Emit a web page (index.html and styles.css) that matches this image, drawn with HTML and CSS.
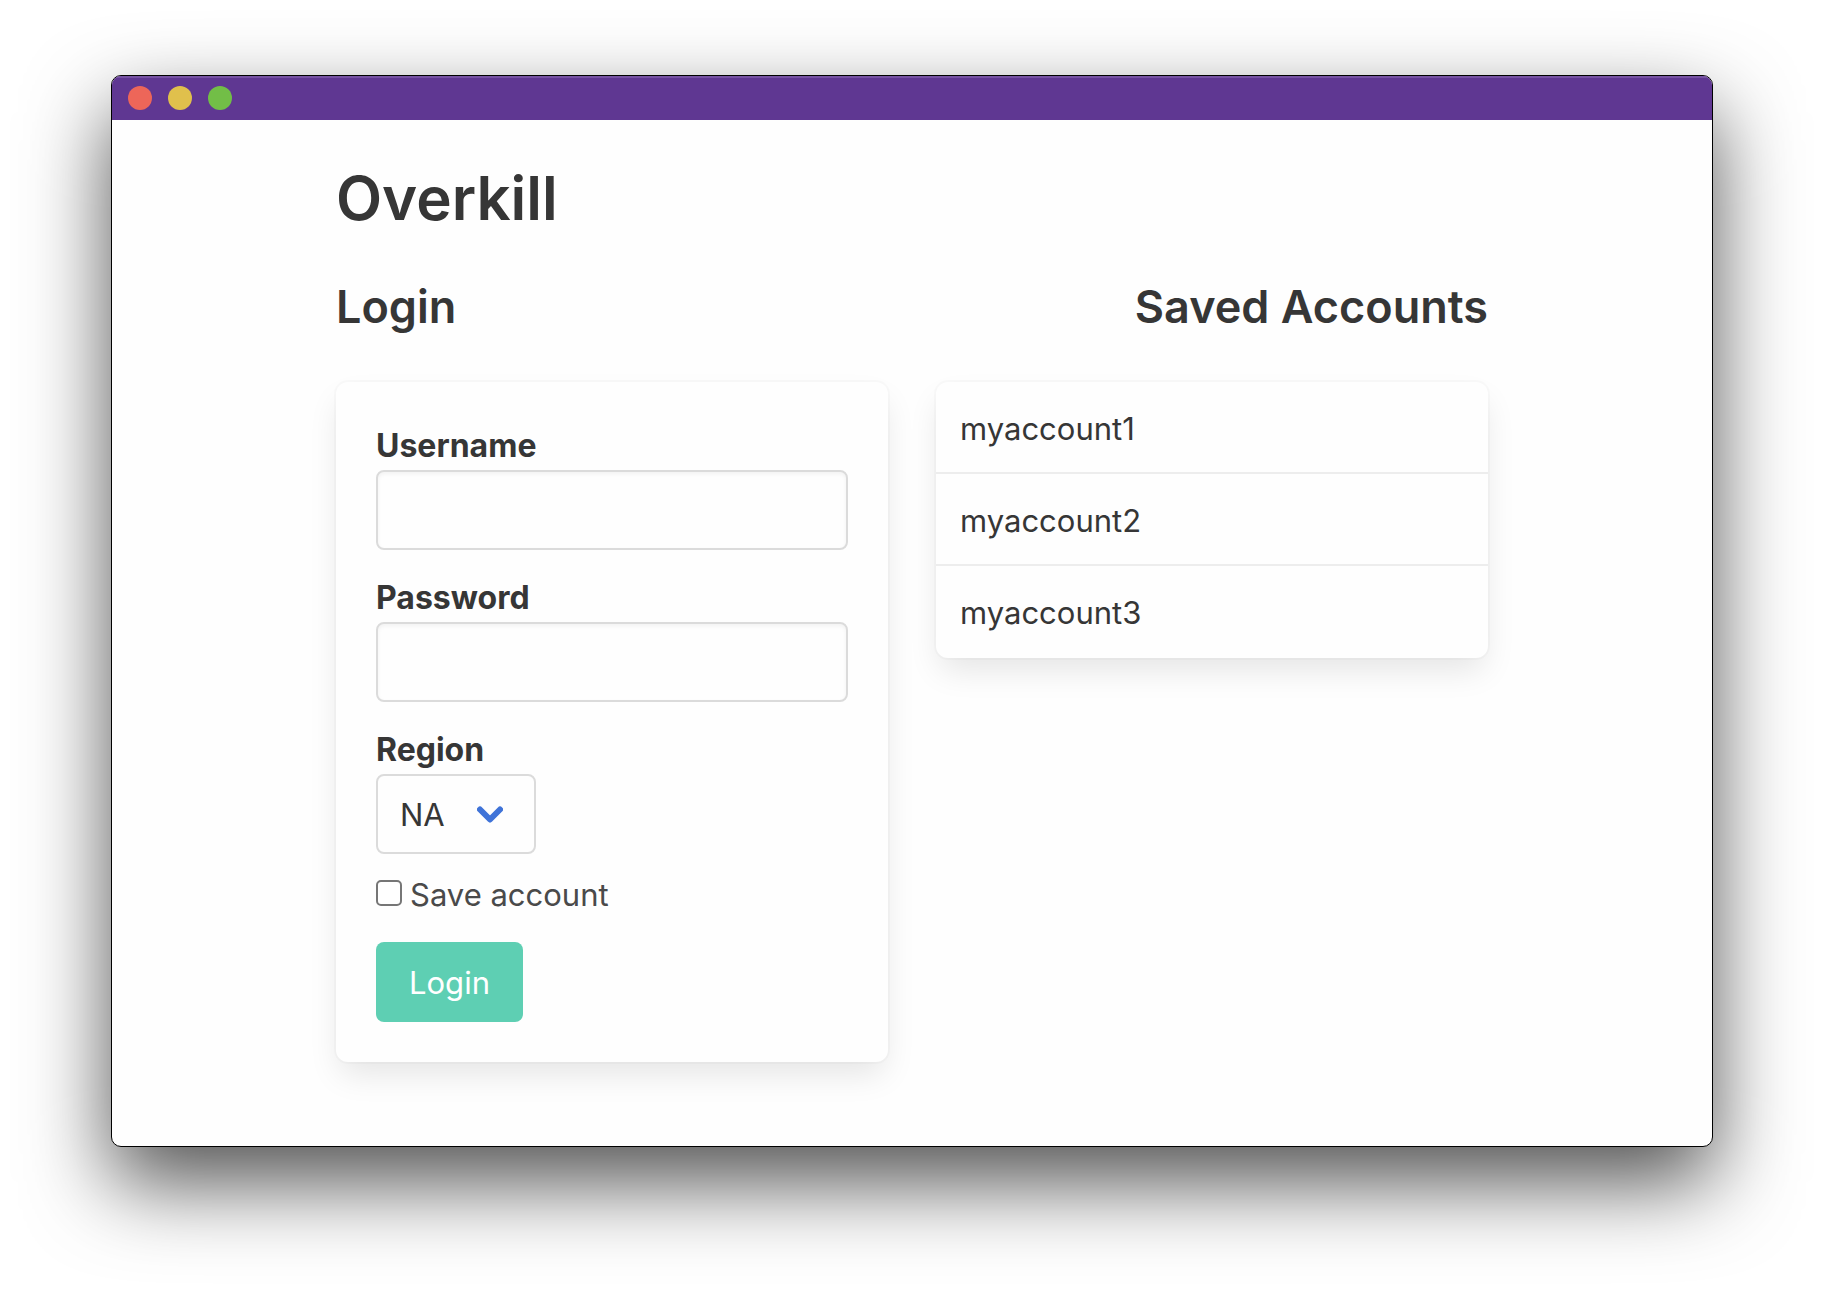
FILE: index.html
```html
<!DOCTYPE html>
<html lang="en">
<head>
<meta charset="utf-8">
<meta name="viewport" content="width=device-width, initial-scale=1">
<title>Overkill</title>
<link rel="stylesheet" href="styles.css">
</head>
<body>
<div class="window">
  <header class="titlebar">
    <span class="dot dot-close"></span>
    <span class="dot dot-minimize"></span>
    <span class="dot dot-zoom"></span>
  </header>
  <main class="container">
    <h1 class="title">Overkill</h1>
    <div class="headings">
      <h2 class="subtitle">Login</h2>
      <h2 class="subtitle">Saved Accounts</h2>
    </div>
    <div class="columns">
      <form class="box login">
        <div class="field">
          <label class="label" for="username">Username</label>
          <input class="input" id="username" type="text">
        </div>
        <div class="field">
          <label class="label" for="password">Password</label>
          <input class="input" id="password" type="password">
        </div>
        <div class="field">
          <label class="label" for="region">Region</label>
          <div class="select">
            <select id="region">
              <option>NA</option>
              <option>EUW</option>
              <option>EUNE</option>
            </select>
            <svg class="chevron" width="26" height="18" viewBox="0 0 26 18" aria-hidden="true">
              <path d="M3 3.5 13 13.5 23 3.5" fill="none" stroke="#3f73d8" stroke-width="6" stroke-linecap="round" stroke-linejoin="round"/>
            </svg>
          </div>
        </div>
        <label class="checkbox"><input type="checkbox">Save account</label>
        <button class="button" type="button">Login</button>
      </form>
      <ul class="box accounts">
        <li class="account">myaccount1</li>
        <li class="account">myaccount2</li>
        <li class="account">myaccount3</li>
      </ul>
    </div>
  </main>
</div>
</body>
</html>
```
FILE: styles.css
```css
* {
  box-sizing: border-box;
}

body {
  margin: 0;
  padding: 75px 111px 147px;
  background: #fff;
  color: #363636;
  font: 400 31px/48px Inter, "Liberation Sans", sans-serif;
}

.window {
  overflow: hidden;
  border: 1px solid #000;
  border-radius: 10px;
  background: #fefefe;
  box-shadow: 0 36px 84px rgba(0, 0, 0, 0.68);
}

.titlebar {
  display: flex;
  align-items: center;
  gap: 16px;
  height: 44px;
  padding: 0 16px;
  background: #5f3792;
  box-shadow: inset 0 2px 0 #7652a3;
}

.dot {
  width: 24px;
  height: 24px;
  border-radius: 50%;
}

.dot-close {
  background: #ed6659;
}

.dot-minimize {
  background: #e0c04c;
}

.dot-zoom {
  background: #72be47;
}

.container {
  max-width: 1200px;
  margin: 0 auto;
  padding: 40px 24px 84px;
}

.title {
  margin: 0;
  font-size: 60px;
  font-weight: 600;
  line-height: 76px;
}

.headings {
  display: flex;
  justify-content: space-between;
  padding: 42px 0 46px;
}

.subtitle {
  margin: 0;
  font-size: 45px;
  font-weight: 600;
  line-height: 58px;
}

.columns {
  display: grid;
  grid-template-columns: 1fr 1fr;
  align-items: start;
  gap: 48px;
}

.box {
  margin: 0;
  border-radius: 12px;
  background: #fefefe;
  box-shadow: 0 16px 32px -4px rgba(10, 10, 10, 0.1), 0 0 0 2px rgba(10, 10, 10, 0.02);
}

.login {
  display: flex;
  flex-direction: column;
  align-items: flex-start;
  gap: 24px;
  padding: 40px;
}

.field {
  width: 100%;
}

.label {
  display: block;
  font-size: 32px;
  font-weight: 700;
}

.input,
.select select {
  display: block;
  height: 80px;
  border: 2px solid #dbdbdb;
  border-radius: 8px;
  background: #fefefe;
  color: inherit;
  font: inherit;
}

.input {
  width: 100%;
  padding: 0 22px;
  box-shadow: inset 0 2px 4px rgba(10, 10, 10, 0.05);
}

.select {
  position: relative;
  width: 160px;
}

.select select {
  width: 100%;
  padding: 2px 22px 0;
  appearance: none;
}

.chevron {
  position: absolute;
  top: 32px;
  right: 33px;
  pointer-events: none;
}

.checkbox {
  display: flex;
  align-items: center;
  gap: 8px;
  padding-bottom: 6px;
  color: #4a4a4a;
  line-height: 34px;
}

.checkbox input {
  width: 26px;
  height: 26px;
  margin: 0 0 4px;
  border: 2px solid #767676;
  border-radius: 5px;
  background: #fff;
  appearance: none;
}

.checkbox input:checked {
  background: #3f73d8;
}

.button {
  height: 80px;
  padding: 2px 33px 0;
  border: 0;
  border-radius: 8px;
  background: #5ecfb3;
  color: #fff;
  font: inherit;
}

.accounts {
  padding: 0;
  list-style: none;
}

.account {
  height: 92px;
  padding: 23px 24px 0;
}

.account:not(:last-child) {
  border-bottom: 2px solid #ededed;
}
```
